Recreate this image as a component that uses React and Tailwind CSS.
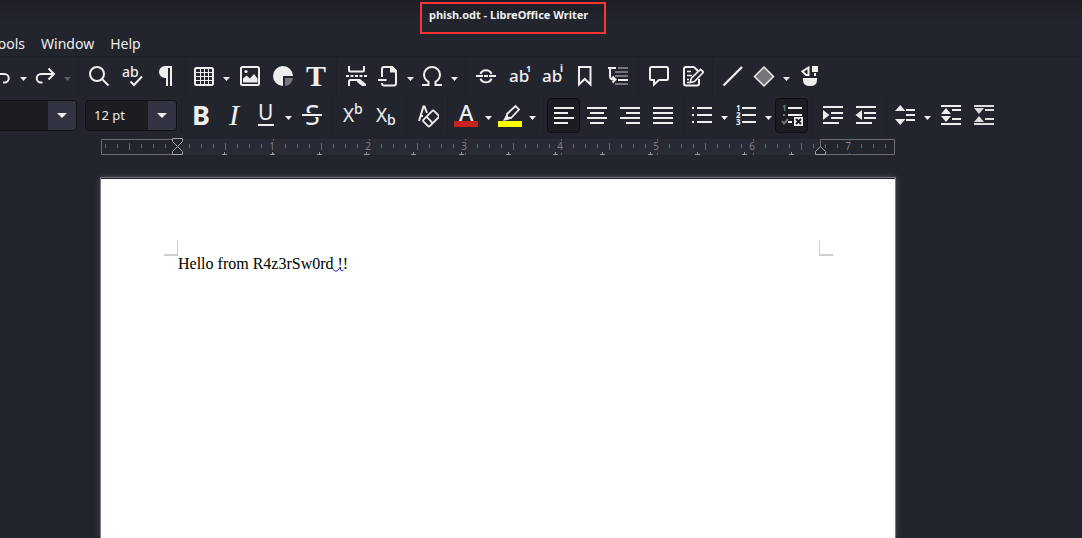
import React from "react";

const FG = "#eeeeee";
const DIM = "#75767b";

const Bar = ({ x, y, w, h = 2, fill = FG }) => (
  <rect x={x} y={y} width={w} height={h} fill={fill} />
);

const Glyph = ({ x, y, size, weight = 400, serif, italic, fill = FG, children }) => (
  <text
    x={x}
    y={y}
    fill={fill}
    fontSize={size}
    fontWeight={weight}
    fontStyle={italic ? "italic" : "normal"}
    fontFamily={serif ? '"Liberation Serif", serif' : '"Noto Sans", sans-serif'}
  >
    {children}
  </text>
);

const line = { fill: "none", stroke: FG, strokeWidth: 2 };

const icons = {
  undo: <path {...line} d="M4 10H16.500a4.200 4.200 0 0 1 0 8.500H15M9 5L4 10l5 5" />,
  redo: <path {...line} d="M21 10H9a4.200 4.200 0 0 0 0 8.500h1.500M16.500 4.500L22 10l-5.500 5.500" />,
  search: (
    <>
      <circle {...line} cx="11" cy="10" r="7" />
      <path {...line} d="M16 15l6.500 6.500" />
    </>
  ),
  spell: (
    <>
      <Glyph x={3} y={13} size={14} weight={500}>ab</Glyph>
      <path {...line} d="M11.500 17.500l3.500 3.500 8-8.500" />
    </>
  ),
  pilcrow: (
    <path fill={FG} d="M20 2v20h-2V4h-2v18h-2V14h-1a6 6 0 0 1 0-12z" />
  ),
  table: (
    <>
      <rect {...line} x="4" y="4" width="18" height="17" rx="1.500" />
      <path fill="none" stroke={FG} d="M9.500 4v17M13.500 4v17M17.500 4v17M4 8.500h18M4 12.500h18M4 16.500h18" />
    </>
  ),
  image: (
    <>
      <rect {...line} x="4" y="3" width="18" height="18" rx="1.500" />
      <circle cx="9" cy="7.500" r="1.600" fill={FG} />
      <path fill={FG} d="M6 18.500v-4l3.500-3 3.500 3 4-4.500 3.500 4.500v4z" />
    </>
  ),
  chart: (
    <>
      <path fill={FG} d="M13 22a10 10 0 1 1 10-10H13z" />
      <path fill={DIM} d="M15 14h8a9 9 0 0 1-8 8z" />
    </>
  ),
  textbox: <Glyph x={3} y={22} size={30} weight={700} serif>T</Glyph>,
  pageBreak: (
    <>
      <path {...line} d="M5 2v4q0 1.500 1.500 1.500h12Q20 7.500 20 6V2M5 22v-4.500Q5 16 6.500 16H14" />
      <path fill={FG} d="M13 15h3l6 5v2h-4l-5-4z" />
      <path {...line} strokeDasharray="3 1.500" d="M2 12h22" />
    </>
  ),
  field: (
    <>
      <path {...line} d="M7 13V5q0-2 2-2h8l4 4v12q0 2.500-2 2.500H9q-2 0-2-2.500M3 16h8.500" />
      <path fill={FG} d="M15 2h2.500l4.500 5v1.500h-7z" />
    </>
  ),
  omega: (
    <path {...line} d="M3 21h6.500v-3.200C6.500 16 5 13.500 5 10.500a8 7.500 0 0 1 16 0c0 3-1.500 5.500-4.500 7.300V21H23" />
  ),
  link: (
    <path {...line} d="M7.500 10a5.700 5.200 0 0 1 11 0M7.500 14.500a5.700 5.200 0 0 0 11 0M3 12h7M11 12h4M16 12H23" />
  ),
  footnote: (
    <>
      <Glyph x={3} y={18} size={17} weight={500}>ab</Glyph>
      <Glyph x={20} y={8} size={9} weight={700}>1</Glyph>
    </>
  ),
  endnote: (
    <>
      <Glyph x={3} y={18} size={17} weight={500}>ab</Glyph>
      <Glyph x={21} y={8} size={10} weight={700}>i</Glyph>
    </>
  ),
  bookmark: <path {...line} d="M7 3h11.500v17.500L12.750 15 7 20.500z" />,
  crossRef: (
    <>
      <path {...line} d="M3 4h8M5 4v8q0 3.500 4 3.500M7.500 12.500l3 3-3 3" />
      <Bar x={13} y={3} w={10} fill={DIM} />
      <Bar x={10} y={7} w={13} fill={DIM} />
      <Bar x={10} y={11} w={13} fill={DIM} />
      <Bar x={13} y={15} w={10} />
      <Bar x={10} y={19} w={13} fill={DIM} />
    </>
  ),
  comment: (
    <path {...line} d="M5.500 3h15Q22 3 22 4.500v10q0 1.500-1.500 1.500H13l-5 4.500V16H5.500Q4 16 4 14.500v-10Q4 3 5.500 3z" />
  ),
  track: (
    <>
      <path {...line} d="M15 3H7Q5 3 5 5v14.500q0 2 2 2h11q2 0 2-2V15M15 3l4 4" />
      <path fill="none" stroke={FG} strokeWidth="1.500" d="M8 7.500h4M8 11.500h5M8 15.500h2M8 18.500h2" />
      <path fill="#23252e" stroke={FG} strokeWidth="1.700" d="M11 18.500l1.500-4.500L21.500 5.500l3 2.500-9 9.500z" />
    </>
  ),
  stroke: <path {...line} strokeWidth="2.300" d="M3.500 21.500L22 3" />,
  diamond: <path d="M13 3l9.500 9.500L13 22 3.500 12.500z" fill={DIM} stroke={FG} strokeWidth="1.500" />,
  shapes: (
    <>
      <path {...line} d="M11.500 3.500v7.500H9L5.500 7.500z" />
      <Bar x={15} y={2} w={6} h={6} />
      <Bar x={17} y={9} w={2} h={3} />
      <path fill={FG} d="M6 14h14v2q0 6-7 6t-7-6z" />
    </>
  ),
  bold: <Glyph x={3} y={22} size={27} weight={700}>B</Glyph>,
  italic: <Glyph x={7} y={22} size={30} serif italic>I</Glyph>,
  underline: (
    <>
      <Glyph x={5} y={17} size={21}>U</Glyph>
      <Bar x={5} y={21} w={16} />
    </>
  ),
  strike: (
    <>
      <Glyph x={6} y={22} size={27}>S</Glyph>
      <Bar x={3} y={10} w={20} h={4} fill="#23252e" />
      <Bar x={3} y={11} w={20} />
    </>
  ),
  superscript: (
    <>
      <Glyph x={3} y={19} size={19}>X</Glyph>
      <Glyph x={14} y={11} size={14} weight={500}>b</Glyph>
    </>
  ),
  subscript: (
    <>
      <Glyph x={3} y={19} size={19}>X</Glyph>
      <Glyph x={14} y={22} size={14} weight={500}>b</Glyph>
    </>
  ),
  clear: (
    <>
      <path {...line} d="M5 18L9.500 3.500h1L13 10M6.500 13H9" />
      <g transform="rotate(-45 17 15.500)">
        <rect x="9.500" y="11" width="15" height="9" rx="1.500" fill="#23252e" stroke={FG} strokeWidth="1.800" />
        <path fill="none" stroke={FG} strokeWidth="1.800" d="M15 11v9" />
      </g>
    </>
  ),
  fontColor: (
    <>
      <Glyph x={6} y={18} size={22} weight={500}>A</Glyph>
      <Bar x={1} y={18} w={24} h={6} fill="#c9211e" />
    </>
  ),
  highlight: (
    <>
      <path {...line} strokeWidth="1.800" d="M10 11l8.500-8 3.500 3.500-8 8.500-4-.5zM10 11v3.500" />
      <path fill={FG} d="M9 12l4.500 4L6 18z" />
      <Bar x={1} y={18} w={24} h={6} fill="#ffff00" />
    </>
  ),
  left: (
    <>
      <Bar x={3} y={4} w={20} /><Bar x={3} y={9} w={14} /><Bar x={3} y={14} w={20} /><Bar x={3} y={19} w={14} />
    </>
  ),
  center: (
    <>
      <Bar x={3} y={4} w={20} /><Bar x={6} y={9} w={14} /><Bar x={3} y={14} w={20} /><Bar x={6} y={19} w={14} />
    </>
  ),
  right: (
    <>
      <Bar x={3} y={4} w={20} /><Bar x={9} y={9} w={14} /><Bar x={3} y={14} w={20} /><Bar x={9} y={19} w={14} />
    </>
  ),
  justify: (
    <>
      <Bar x={3} y={4} w={20} /><Bar x={3} y={9} w={20} /><Bar x={3} y={14} w={20} /><Bar x={3} y={19} w={20} />
    </>
  ),
  bullets: (
    <>
      {[4, 11, 18].map((y) => (
        <g key={y}><Bar x={3} y={y} w={2} /><Bar x={8} y={y} w={15} /></g>
      ))}
    </>
  ),
  numbers: (
    <>
      {[4, 11, 18].map((y, i) => (
        <g key={y}>
          <Glyph x={3} y={y + 4} size={8} weight={700}>{i + 1}</Glyph>
          <Bar x={9} y={y} w={14} />
        </g>
      ))}
    </>
  ),
  outline: (
    <>
      <Glyph x={3} y={8} size={8} weight={700} fill={DIM}>1</Glyph>
      <Bar x={9} y={4} w={14} />
      <Bar x={4} y={11} w={2} fill={DIM} />
      <Bar x={9} y={11} w={14} />
      <path fill="none" stroke={DIM} strokeWidth="2" d="M3 18l2 2.500L9 16" />
      <Bar x={9} y={18} w={4} />
      <Bar x={15} y={14} w={9} h={9} />
      <path fill="none" stroke="#1b1d23" strokeWidth="2" d="M17 16l5 5M22 16l-5 5" />
    </>
  ),
  indent: (
    <>
      <Bar x={3} y={3} w={20} /><Bar x={11} y={9} w={12} /><Bar x={11} y={14} w={12} /><Bar x={3} y={19} w={16} />
      <path fill={FG} d="M3 7l6.500 5L3 17z" />
    </>
  ),
  outdent: (
    <>
      <Bar x={3} y={3} w={20} /><Bar x={11} y={9} w={12} /><Bar x={11} y={14} w={12} /><Bar x={3} y={19} w={16} />
      <path fill={FG} d="M9 7L2.500 12 9 17z" />
    </>
  ),
  spacing: (
    <>
      <path fill={FG} d="M3 8l5.250-6 5.250 6zM3 16h10.500l-5.250 6z" />
      <Bar x={14} y={6} w={9} /><Bar x={14} y={11} w={9} /><Bar x={14} y={16} w={9} />
    </>
  ),
  increase: (
    <>
      <path fill={FG} d="M3 11l5-6 5 6zM3 13h10l-5 6z" />
      <Bar x={3} y={2} w={20} /><Bar x={14} y={6} w={9} /><Bar x={14} y={15} w={9} /><Bar x={3} y={20} w={20} />
    </>
  ),
  decrease: (
    <>
      <path fill="#dddddd" d="M3 5h10l-5 6zM3 19l5-6 5 6z" />
      <Bar x={3} y={2} w={20} fill="#dddddd" /><Bar x={14} y={6} w={9} fill="#dddddd" />
      <Bar x={14} y={15} w={9} fill="#dddddd" /><Bar x={3} y={20} w={20} fill="#dddddd" />
    </>
  ),
};

function Icon({ name }) {
  return (
    <svg className="size-[25px] shrink-0" viewBox="0 0 25 25" aria-hidden="true">
      {icons[name]}
    </svg>
  );
}

function Tool({ icon, label, active }) {
  const state = active ? "rounded border border-[#0e0f13] bg-[#1b1d23]" : "";
  return (
    <button
      type="button"
      aria-label={label}
      aria-pressed={active}
      className={`flex h-[35px] w-[33px] shrink-0 items-center justify-center ${state}`}
    >
      <Icon name={icon} />
    </button>
  );
}

function Split({ icon, label, disabled }) {
  return (
    <div className="flex h-[35px] w-11 shrink-0">
      <button type="button" aria-label={label} className="flex w-[29px] items-center justify-center">
        <Icon name={icon} />
      </button>
      <button type="button" aria-label={`${label} options`} disabled={disabled} className="flex w-[15px] items-center justify-end pt-1 pr-[3px]">
        <svg width="7" height="4" viewBox="0 0 7 4" aria-hidden="true">
          <path d="M0 0h7L3.500 4z" fill={disabled ? "#5c5e66" : FG} />
        </svg>
      </button>
    </div>
  );
}

function Sep() {
  return (
    <div className="flex h-[35px] w-2 shrink-0 justify-center">
      <div className="w-px bg-[#1e2028]" />
    </div>
  );
}

function Combo({ id, label, value }) {
  return (
    <div className="flex h-[31px] w-[92px] shrink-0 overflow-hidden rounded border border-[#101116] bg-[#1b1d23]">
      <label htmlFor={id} className="sr-only">{label}</label>
      <input id={id} defaultValue={value} className="w-0 grow bg-transparent pl-2 text-[13px] text-[#eeeeee] outline-none" />
      <button type="button" aria-label={`${label} list`} className="flex w-7 items-center justify-center bg-[#323541]">
        <svg width="10" height="5" viewBox="0 0 10 5" aria-hidden="true">
          <path d="M0 0h10L5 5z" fill={FG} />
        </svg>
      </button>
    </div>
  );
}

const ORIGIN = 76;
const ticks = Array.from({ length: 66 }, (_, i) => 4 + i * 12);
const tabs = Array.from({ length: 13 }, (_, i) => Math.round(ORIGIN + 47.25 * (i + 1)));

function Ruler() {
  return (
    <svg className="block h-[18px] w-[795px] shrink-0" viewBox="0 0 795 18" role="img" aria-label="Horizontal ruler">
      <rect x="76" y="1" width="643" height="16" fill="#282a36" />
      <path d="M76 1.500H.5v15H76M719.500 12V1.500h74v15H719" fill="none" stroke="#6c6d73" />
      {ticks.map((x) => {
        const step = (x - ORIGIN) / 12;
        if (step === 0) return null;
        if (step % 8 === 0) {
          return (
            <g key={x}>
              <path d={`M${x + 0.5} 1v2M${x + 0.5} 15v2`} stroke="#66676e" />
              {step > 0 && (
                <text x={x - 1} y="12" textAnchor="middle" fontSize="10" fill="#7c7d83" fontFamily='"Noto Sans", sans-serif'>
                  {step / 8}
                </text>
              )}
            </g>
          );
        }
        const tall = step % 4 === 0;
        return <path key={x} d={`M${x + 0.5} ${tall ? 5 : 6}v${tall ? 7 : 4}`} stroke="#66676e" />;
      })}
      {tabs.map((x) => (
        <path key={x} d={`M${x + 0.5} 14v3M${x - 2} 16.500h5`} stroke="#96979b" />
      ))}
      <g fill="#23252e" stroke="#a3a4a8">
        <path d="M71.500.5h10v3l-5 5-5-5zM76.500 8.500l5 5v3h-10v-3z" />
        <path d="M719.500 8.500l5 5v3h-10v-3z" />
      </g>
    </svg>
  );
}

export default function App() {
  return (
    <div className="flex h-screen flex-col overflow-hidden bg-[#23252e] font-['Noto_Sans',sans-serif] text-[#eeeeee]">
      <header className="flex h-[34px] shrink-0 bg-linear-to-b from-[#1c1d24] to-[#23252e] to-60% pt-[2px] pl-[420px]">
        <h1 className="w-[186px] border-2 border-[#ff3333] pl-[7px] text-[11px] leading-[22px] font-bold whitespace-nowrap">
          phish.odt - LibreOffice Writer
        </h1>
      </header>

      <nav aria-label="Menu bar" className="-ml-[17px] flex h-[22px] shrink-0 text-sm leading-5">
        {["Tools", "Window", "Help"].map((item) => (
          <button key={item} type="button" className="flex px-2">{item}</button>
        ))}
      </nav>

      <div className="-ml-[14px] flex shrink-0 flex-col gap-1 border-t border-[#1f2129] pt-[2px]">
        <div role="toolbar" aria-label="Standard" className="flex">
          <Split icon="undo" label="Undo" />
          <Split icon="redo" label="Redo" disabled />
          <Sep />
          <Tool icon="search" label="Find and replace" />
          <Tool icon="spell" label="Spelling" />
          <Tool icon="pilcrow" label="Formatting marks" />
          <Sep />
          <Split icon="table" label="Insert table" />
          <Tool icon="image" label="Insert image" />
          <Tool icon="chart" label="Insert chart" />
          <Tool icon="textbox" label="Insert text box" />
          <Sep />
          <Tool icon="pageBreak" label="Insert page break" />
          <Split icon="field" label="Insert field" />
          <Split icon="omega" label="Insert special character" />
          <Sep />
          <Tool icon="link" label="Insert hyperlink" />
          <Tool icon="footnote" label="Insert footnote" />
          <Tool icon="endnote" label="Insert endnote" />
          <Tool icon="bookmark" label="Insert bookmark" />
          <Tool icon="crossRef" label="Insert cross-reference" />
          <Sep />
          <Tool icon="comment" label="Insert comment" />
          <Tool icon="track" label="Track changes" />
          <Sep />
          <Tool icon="stroke" label="Insert line" />
          <Split icon="diamond" label="Basic shapes" />
          <Tool icon="shapes" label="Draw functions" />
        </div>
        <div role="toolbar" aria-label="Formatting" className="flex items-center">
          <div className="-ml-px flex gap-2">
            <Combo id="font-name" label="Font name" value="" />
            <Combo id="font-size" label="Font size" value="12 pt" />
          </div>
          <Sep />
          <Tool icon="bold" label="Bold" />
          <Tool icon="italic" label="Italic" />
          <Split icon="underline" label="Underline" />
          <Tool icon="strike" label="Strikethrough" />
          <Sep />
          <Tool icon="superscript" label="Superscript" />
          <Tool icon="subscript" label="Subscript" />
          <Sep />
          <Tool icon="clear" label="Clear formatting" />
          <Sep />
          <Split icon="fontColor" label="Font color" />
          <Split icon="highlight" label="Highlighting" />
          <Sep />
          <Tool icon="left" label="Align left" active />
          <Tool icon="center" label="Align center" />
          <Tool icon="right" label="Align right" />
          <Tool icon="justify" label="Justify" />
          <Sep />
          <Split icon="bullets" label="Bulleted list" />
          <Split icon="numbers" label="Numbered list" />
          <Tool icon="outline" label="No list" active />
          <Sep />
          <Tool icon="indent" label="Increase indent" />
          <Tool icon="outdent" label="Decrease indent" />
          <Sep />
          <Split icon="spacing" label="Line spacing" />
          <Tool icon="increase" label="Increase paragraph spacing" />
          <Tool icon="decrease" label="Decrease paragraph spacing" />
        </div>
      </div>

      <main className="flex grow flex-col pt-[5px] pl-[101px]">
        <Ruler />
        <div className="mt-[21px] -ml-px w-[796px] grow border-x border-t border-[#77787c] bg-[#1b1d23] pt-px shadow-[0_0_6px_rgba(150,150,150,0.35)]">
          <article className="h-full bg-white pt-[62px] pr-[62px] pl-[63px] font-['Liberation_Serif',serif] text-black">
            <div className="flex justify-between" aria-hidden="true">
              <div className="h-[15px] w-[14px] border-r border-b-2 border-[#cfcfcf]" />
              <div className="h-[15px] w-[14px] border-b-2 border-l border-[#cfcfcf]" />
            </div>
            <p className="pl-[14px] text-base leading-4">
              Hello from R4z3rSw0rd
              <span className="relative">
                {" !"}
                <svg className="absolute -left-px bottom-0" width="11" height="4" viewBox="0 0 11 4" aria-hidden="true">
                  <path d="M0 1.500l2 1.500h2l2.500-2.500L9 3l1.500-1" fill="none" stroke="#2a2ae0" />
                </svg>
              </span>
              !
            </p>
          </article>
        </div>
      </main>
    </div>
  );
}
